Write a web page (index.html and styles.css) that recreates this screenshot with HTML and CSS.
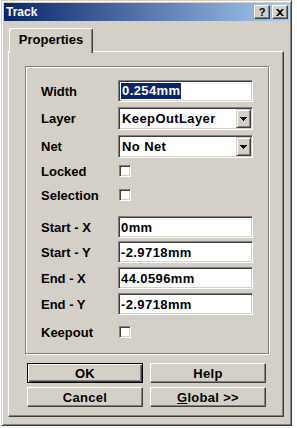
FILE: index.html
```html
<!DOCTYPE html>
<html>
<head>
<meta charset="utf-8">
<title>Track</title>
<link rel="stylesheet" href="styles.css">
</head>
<body>
<div class="dialog">
  <div class="titlebar">
    <span class="title">Track</span>
    <div class="tb-buttons">
      <div class="tb-btn">?</div>
      <div class="tb-btn"><svg width="8" height="7" viewBox="0 0 8 7"><path d="M0 0h2l2 2 2-2h2L5 3.5 8 7H6L4 5 2 7H0l3-3.5z"/></svg></div>
    </div>
  </div>
  <div class="client">
    <div class="tab">Properties</div>
    <div class="panel">
      <div class="group">
        <div class="row"><span class="label">Width</span><div class="field"><span class="sel">0.254mm</span></div></div>
        <div class="row tall mt5"><span class="label">Layer</span><div class="field select"><span class="val">KeepOutLayer</span><div class="arrow"><svg width="7" height="4" viewBox="0 0 7 4"><path d="M0 0h7v1h-1v1h-1v1h-1v1h-1v-1h-1v-1h-1v-1h-1z"/></svg></div></div></div>
        <div class="row tall mt5"><span class="label">Net</span><div class="field select"><span class="val">No Net</span><div class="arrow"><svg width="7" height="4" viewBox="0 0 7 4"><path d="M0 0h7v1h-1v1h-1v1h-1v1h-1v-1h-1v-1h-1v-1h-1z"/></svg></div></div></div>
        <div class="row mt2"><span class="label">Locked</span><div class="check"></div></div>
        <div class="row mt2"><span class="label">Selection</span><div class="check"></div></div>
        <div class="row mt10"><span class="label">Start - X</span><div class="field">0mm</div></div>
        <div class="row mt3"><span class="label">Start - Y</span><div class="field">-2.9718mm</div></div>
        <div class="row mt4"><span class="label">End - X</span><div class="field">44.0596mm</div></div>
        <div class="row mt4"><span class="label">End - Y</span><div class="field">-2.9718mm</div></div>
        <div class="row mt6"><span class="label">Keepout</span><div class="check"></div></div>
      </div>
      <div class="buttons">
        <div class="btn default">OK</div>
        <div class="btn">Help</div>
        <div class="btn">Cancel</div>
        <div class="btn"><span><u>G</u>lobal &gt;&gt;</span></div>
      </div>
    </div>
  </div>
</div>
</body>
</html>
```

FILE: styles.css
```css
html, body {
  margin: 0;
  padding: 0;
  background: #ffffff;
}

body {
  font-family: "Liberation Sans", Arial, sans-serif;
  font-size: 13px;
  color: #000;
}

.dialog {
  margin-left: 1px;
  width: 291px;
  height: 426px;
  box-sizing: border-box;
  background: #d4d0c8;
  border: 1px solid;
  border-color: #d4d0c8 #404040 #404040 #d4d0c8;
  box-shadow: inset 1px 1px #ffffff, inset -1px -1px #808080;
  padding: 2px;
  display: flex;
  flex-direction: column;
}

.titlebar {
  height: 18px;
  flex: none;
  background: linear-gradient(to right, #0a246a, #a6caf0);
  display: flex;
  align-items: center;
  justify-content: space-between;
  padding: 0 1px 0 2px;
}

.title {
  color: #fff;
  font-weight: bold;
  font-size: 12px;
}

.tb-buttons {
  display: flex;
  gap: 2px;
}

.tb-btn {
  width: 16px;
  height: 14px;
  box-sizing: border-box;
  background: #d4d0c8;
  border: 1px solid;
  border-color: #ffffff #404040 #404040 #ffffff;
  box-shadow: inset -1px -1px #808080;
  display: flex;
  align-items: center;
  justify-content: center;
  font-weight: bold;
  font-size: 11px;
  line-height: 1;
}

.client {
  flex: 1;
  padding: 7px 5px 6px 4px;
  display: flex;
  flex-direction: column;
}

.tab {
  margin-left: 1px;
  width: 84px;
  height: 25px;
  flex: none;
  box-sizing: border-box;
  border-top: 1px solid #ffffff;
  border-left: 1px solid #ffffff;
  border-right: 1px solid #404040;
  box-shadow: inset -1px 0 #808080;
  border-radius: 3px 3px 0 0;
  background: #d4d0c8;
  font-weight: bold;
  font-size: 13px;
  display: flex;
  align-items: center;
  justify-content: center;
  padding-bottom: 3px;
  margin-bottom: -2px;
  position: relative;
  z-index: 1;
}

.panel {
  flex: 1;
  box-sizing: border-box;
  border: 1px solid;
  border-color: #ffffff #404040 #404040 #ffffff;
  box-shadow: inset -1px -1px #808080;
  padding: 14px 0 0 16px;
}

.group {
  width: 244px;
  height: 288px;
  box-sizing: border-box;
  border: 1px solid #808080;
  box-shadow: inset 1px 1px #ffffff, 1px 1px #ffffff;
  padding: 13px 0 0 15px;
}

.row {
  display: flex;
  align-items: center;
  height: 22px;
}

.row.tall { height: 23px; }
.mt2 { margin-top: 2px; }
.mt3 { margin-top: 3px; }
.mt4 { margin-top: 4px; }
.mt5 { margin-top: 5px; }
.mt6 { margin-top: 6px; }
.mt10 { margin-top: 10px; }

.label {
  width: 77px;
  flex: none;
  font-weight: bold;
  font-size: 13px;
}

.field {
  width: 135px;
  height: 100%;
  box-sizing: border-box;
  background: #ffffff;
  border: 1px solid;
  border-color: #808080 #ffffff #ffffff #808080;
  box-shadow: inset 1px 1px #404040, inset -1px -1px #d4d0c8;
  font-weight: bold;
  font-size: 13px;
  letter-spacing: 0.4px;
  padding-left: 2px;
  display: flex;
  align-items: center;
  white-space: nowrap;
}

.sel {
  background: #0a246a;
  color: #ffffff;
  line-height: 16px;
  padding: 0 1px;
}

.field.select {
  padding: 1px;
}

.val {
  flex: 1;
  padding-left: 2px;
}

.arrow {
  width: 15px;
  height: 100%;
  box-sizing: border-box;
  background: #d4d0c8;
  border: 1px solid;
  border-color: #d4d0c8 #404040 #404040 #d4d0c8;
  box-shadow: inset 1px 1px #ffffff, inset -1px -1px #808080;
  display: flex;
  align-items: center;
  justify-content: center;
}

.check {
  width: 12px;
  height: 12px;
  margin-left: 1px;
  box-sizing: border-box;
  background: #ffffff;
  border: 1px solid;
  border-color: #808080 #ffffff #ffffff #808080;
  box-shadow: inset 1px 1px #404040, inset -1px -1px #d4d0c8;
}

.buttons {
  display: grid;
  grid-template-columns: 116px 116px;
  column-gap: 7px;
  row-gap: 4px;
  margin: 9px 0 0 2px;
}

.btn {
  height: 20px;
  box-sizing: border-box;
  background: #d4d0c8;
  border: 1px solid;
  border-color: #ffffff #404040 #404040 #ffffff;
  box-shadow: inset -1px -1px #808080;
  display: flex;
  align-items: center;
  justify-content: center;
  font-weight: bold;
  font-size: 13px;
  letter-spacing: 0.3px;
}

.btn.default {
  border-color: #000000;
  box-shadow: inset 1px 1px #ffffff, inset -1px -1px #404040, inset -2px -2px #808080;
}
```
